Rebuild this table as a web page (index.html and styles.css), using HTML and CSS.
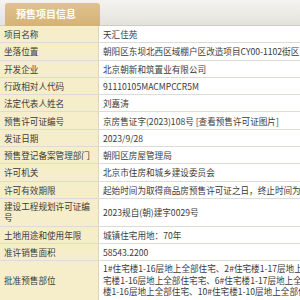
FILE: index.html
```html
<!DOCTYPE html>
<html lang="zh-CN">
<head>
<meta charset="utf-8">
<title>预售项目信息</title>
<link rel="stylesheet" href="styles.css">
</head>
<body>
<div class="tabbar"><div class="tab">预售项目信息</div></div>
<div class="info">
  <div class="row"><div class="label">项目名称</div><div class="value">天汇佳苑</div></div>
  <div class="row"><div class="label">坐落位置</div><div class="value">朝阳区东坝北西区域棚户区改造项目CY00-1102街区</div></div>
  <div class="row"><div class="label">开发企业</div><div class="value">北京朝新和筑置业有限公司</div></div>
  <div class="row"><div class="label">行政相对人代码</div><div class="value">91110105MACMPCCR5M</div></div>
  <div class="row"><div class="label">法定代表人姓名</div><div class="value">刘嘉涛</div></div>
  <div class="row"><div class="label">预售许可证编号</div><div class="value">京房售证字(2023)108号 [查看预售许可证图片]</div></div>
  <div class="row"><div class="label">发证日期</div><div class="value">2023/9/28</div></div>
  <div class="row"><div class="label">预售登记备案管理部门</div><div class="value">朝阳区房屋管理局</div></div>
  <div class="row"><div class="label">许可机关</div><div class="value">北京市住房和城乡建设委员会</div></div>
  <div class="row"><div class="label">许可有效期限</div><div class="value">起始时间为取得商品房预售许可证之日，终止时间为项目竣工验收之日</div></div>
  <div class="row multi"><div class="label">建设工程规划许可证编<br>号</div><div class="value">2023规自(朝)建字0029号</div></div>
  <div class="row"><div class="label">土地用途和使用年限</div><div class="value">城镇住宅用地：70年</div></div>
  <div class="row"><div class="label">准许销售面积</div><div class="value">58543.2200</div></div>
  <div class="row multi"><div class="label">批准预售部位</div><div class="value">1#住宅楼1-16层地上全部住宅、2#住宅楼1-17层地上全部住宅、3#住<br>宅楼1-16层地上全部住宅宅、6#住宅楼1-17层地上全部住宅、7#住宅<br>楼1-16层地上全部住宅、10#住宅楼1-10层地上全部住宅</div></div>
</div>
</body>
</html>
```
FILE: styles.css
```css
html, body {
  margin: 0;
  padding: 0;
  background: #fff;
  overflow: hidden;
}
body {
  width: 300px;
  height: 300px;
  font-family: "Noto Sans CJK SC", "Noto Sans", sans-serif;
  color: #333;
}
.tabbar {
  height: 25px;
  background: linear-gradient(#f4f3ef, #e4e2dc);
  border-bottom: 1px solid #cfccc4;
  padding-left: 5px;
  display: flex;
  align-items: flex-end;
}
.tab {
  width: 84px;
  height: 23px;
  margin-bottom: -1px;
  padding-left: 11px;
  background: linear-gradient(#dfc28c, #d5b377);
  border-radius: 3px 3px 0 0;
  color: #fff;
  font-size: 10px;
  font-weight: bold;
  line-height: 22px;
  white-space: nowrap;
}
.info {
  width: 640px;
}
.row {
  display: grid;
  grid-template-columns: 99px 1fr;
  border-bottom: 1px solid #dcdcd6;
  font-size: 8.6px;
  line-height: 12px;
}
.label {
  background: #f6eecb;
  border-right: 1px solid #ddd6bb;
  padding: 2.15px 4px;
  white-space: nowrap;
  display: flex;
  align-items: center;
  color: #3a3a3a;
}
.value {
  padding: 2.15px 4px;
  white-space: nowrap;
  display: flex;
  align-items: center;
  color: #3a3a3a;
}
.multi {
  line-height: 11.5px;
}
.multi .label,
.multi .value {
  padding: 2px 4px;
}
```
